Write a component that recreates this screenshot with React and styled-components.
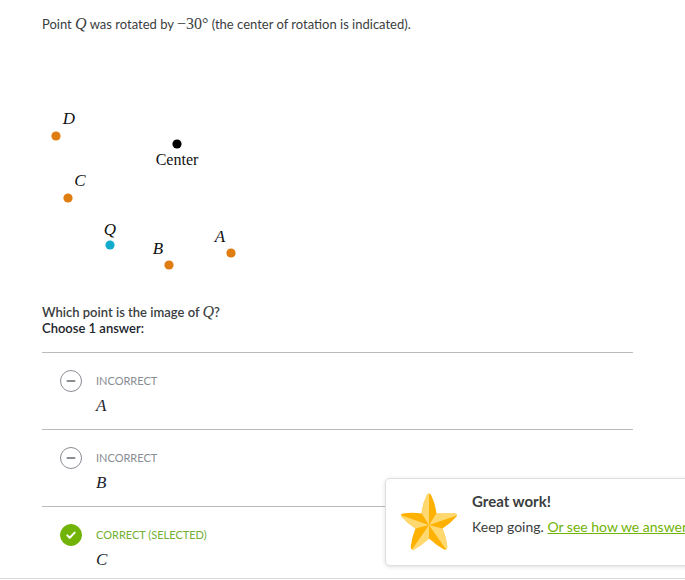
import React from "react"
import styled, { createGlobalStyle } from "styled-components"

const points = [
  { name: "D", x: 14, y: 96, labelX: 27, labelY: 84 },
  { name: "C", x: 26, y: 158, labelX: 38, labelY: 146 },
  { name: "Q", x: 68, y: 205, labelX: 68, labelY: 195, color: "#11accd" },
  { name: "B", x: 127, y: 225, labelX: 116, labelY: 214 },
  { name: "A", x: 189, y: 213, labelX: 178, labelY: 202 },
]

const answers = [
  { name: "A", status: "Incorrect" },
  { name: "B", status: "Incorrect" },
  { name: "C", status: "Correct (selected)", correct: true },
]

const Graph = () => (
  <GraphSvg viewBox="0 0 250 250" role="img" aria-label="Points around a center">
    {points.map((p) => (
      <g key={p.name}>
        <circle cx={p.x} cy={p.y} r="4.6" fill={p.color || "#e07d10"} />
        <PointLabel x={p.labelX} y={p.labelY} $italic>
          {p.name}
        </PointLabel>
      </g>
    ))}
    <circle cx="135" cy="104" r="4.6" fill="#000" />
    <PointLabel x="135" y="125">
      Center
    </PointLabel>
  </GraphSvg>
)

const Star = () => (
  <StarSvg viewBox="0 0 60 60" aria-hidden="true">
    <path
      d="M30 1.5Q31.5 1.5 32.3 3.5Q36.5 12 37.4 21.6L56 21.6Q59 22 57.5 24.5Q52 31 43.5 36.5Q47.5 46 48.3 55Q48 58.5 45 57.5Q37 53 30 46.5Q23 53 15 57.5Q12 58.5 11.7 55Q12.5 46 16.5 36.5Q8 31 2.5 24.5Q1 22 4 21.6Q13 20 22.6 21.6Q23.5 12 27.7 3.5Q28.5 1.5 30 1.5Z"
      fill="#ffb100"
    />
    <g fill="#ffd970">
      <path d="M30 33L30 1.5Q28.5 1.5 27.7 3.5Q23.5 12 22.6 21.6Z" />
      <path d="M30 33L37.4 21.6L56 21.6Q58.5 22 58 23.5Z" />
      <path d="M30 33L43.5 36.5Q47.5 46 48.3 55Q48.2 57 47 57.6Z" />
      <path d="M30 33L30 46.5Q23 53 15 57.5Q14 58 13 57.6Z" />
      <path d="M30 33L16.5 36.5Q8 31 2.5 24.5Q2 24 2 23.3Z" />
    </g>
  </StarSvg>
)

const Answer = ({ name, status, correct }) => (
  <AnswerRow>
    <AnswerLabel>
      <Marker>
        <Radio
          type="radio"
          name="answer"
          $correct={correct}
          defaultChecked={correct}
        />
        <MarkerIcon viewBox="0 0 22 22" aria-hidden="true">
          {correct ? (
            <path d="M7.3 11.4L9.7 13.8L14.7 8.6" stroke="#fff" />
          ) : (
            <path d="M7.5 11H14.5" stroke="#888d93" />
          )}
        </MarkerIcon>
      </Marker>
      <AnswerText>
        <Status $correct={correct}>{status}</Status>
        <Choice>{name}</Choice>
      </AnswerText>
    </AnswerLabel>
  </AnswerRow>
)

const App = () => {
  return (
    <Page>
      <GlobalStyle />
      <Exercise>
        <Prompt>
          Point <MathVar>Q</MathVar> was rotated by <MathNum>−30°</MathNum> (the
          center of rotation is indicated).
        </Prompt>
        <Graph />
        <Question>
          Which point is the image of <MathVar>Q</MathVar>?
        </Question>
        <Instructions>Choose 1 answer:</Instructions>
        <AnswerList>
          {answers.map((a) => (
            <Answer key={a.name} {...a} />
          ))}
        </AnswerList>
      </Exercise>
      <Footer />
      <Toast role="status">
        <Star />
        <div>
          <ToastTitle>Great work!</ToastTitle>
          <ToastText>
            Keep going. <a href="#solution">Or see how we answered it.</a>
          </ToastText>
        </div>
      </Toast>
    </Page>
  )
}

export default App

const GlobalStyle = createGlobalStyle`
  * {
    box-sizing: border-box;
  }
  body {
    margin: 0;
    background: #fff;
    color: #3b3e40;
    font-family: Lato, sans-serif;
    font-size: 13px;
  }
`
const Page = styled.div`
  position: relative;
  height: 100vh;
  overflow: hidden;
  display: flex;
  flex-direction: column;
`
const Exercise = styled.main`
  flex: 1;
  min-height: 0;
  overflow: hidden;
  padding: 14px 52px 0 42px;
`
const Footer = styled.footer`
  flex: none;
  height: 2px;
  border-top: 1px solid #d6d8da;
`
const Prompt = styled.p`
  margin: 0;
  line-height: 20px;
`
const MathVar = styled.i`
  font-family: "Liberation Serif", serif;
  font-size: 16px;
  font-weight: 400;
  line-height: 1;
`
const MathNum = styled.span`
  font-family: "Liberation Serif", serif;
  font-size: 16px;
  line-height: 1;
`
const GraphSvg = styled.svg`
  display: block;
  width: 250px;
  height: 250px;
  margin: 6px 0 14px;
`
const PointLabel = styled.text`
  font-family: "Liberation Serif", serif;
  font-size: ${(p) => (p.$italic ? "17px" : "16px")};
  font-style: ${(p) => (p.$italic ? "italic" : "normal")};
  text-anchor: middle;
  fill: #111;
`
const Question = styled.h1`
  margin: 0;
  font-size: 13px;
  font-weight: 600;
  line-height: 16px;
`
const Instructions = styled.p`
  margin: 0;
  color: #21242c;
  font-size: 13px;
  font-weight: 600;
  line-height: 16px;
`
const AnswerList = styled.ul`
  margin: 16px 0 0;
  padding: 0;
  list-style: none;
`
const AnswerRow = styled.li`
  border-top: 1px solid #b8babd;
`
const AnswerLabel = styled.label`
  display: flex;
  gap: 14px;
  padding: 17px 18px 12px;
`
const Marker = styled.span`
  position: relative;
  width: 22px;
  height: 22px;
`
const Radio = styled.input`
  appearance: none;
  display: block;
  width: 22px;
  height: 22px;
  margin: 0;
  border: 1px solid ${(p) => (p.$correct ? "#71b307" : "#888d93")};
  border-radius: 50%;
  background: ${(p) => (p.$correct ? "#71b307" : "#fff")};
`
const MarkerIcon = styled.svg`
  position: absolute;
  inset: 0;
  pointer-events: none;
  fill: none;
  stroke-width: 2;
  stroke-linecap: round;
  stroke-linejoin: round;
`
const AnswerText = styled.span`
  display: flex;
  flex-direction: column;
  gap: 3px;
`
const Status = styled.span`
  color: ${(p) => (p.$correct ? "#71b032" : "#888d93")};
  font-size: 11px;
  line-height: 22px;
  text-transform: uppercase;
`
const Choice = styled.i`
  color: #21242c;
  font-family: "Liberation Serif", serif;
  font-size: 17px;
  line-height: 22px;
`
const Toast = styled.aside`
  position: absolute;
  bottom: 14px;
  left: 385px;
  display: flex;
  gap: 13px;
  height: 88px;
  padding: 13px;
  border: 1px solid #dedfe1;
  border-radius: 5px;
  background: #fff;
  box-shadow: 0 1px 4px rgba(33, 36, 44, 0.15);
  white-space: nowrap;
`
const StarSvg = styled.svg`
  flex: none;
  width: 60px;
  height: 60px;
`
const ToastTitle = styled.h2`
  margin: 0;
  font-size: 15px;
  font-weight: 700;
  line-height: 18px;
`
const ToastText = styled.p`
  margin: 7px 0 0;
  font-size: 14px;
  line-height: 20px;

  a {
    color: #71b307;
    text-decoration: underline;
  }
`
